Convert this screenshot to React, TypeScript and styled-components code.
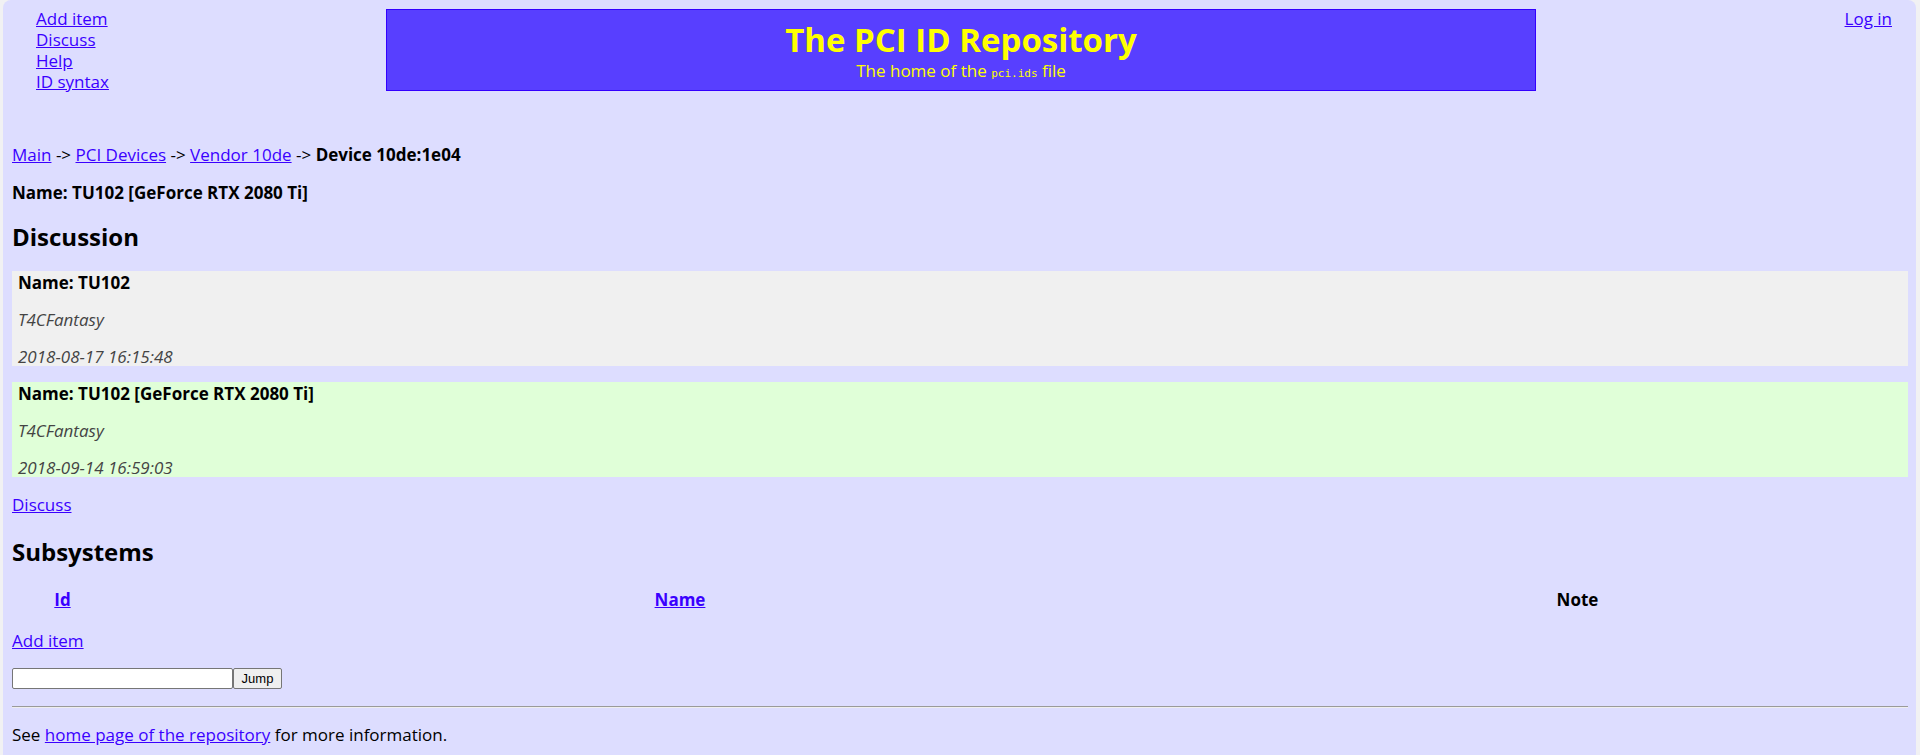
import React from "react";
import styled, { createGlobalStyle } from "styled-components";

const GlobalStyle = createGlobalStyle`
  html { background: #f1f1f3; }
  body {
    margin: 0;
    font-family: "Open Sans", "Noto Sans", "DejaVu Sans", sans-serif;
    font-size: 17px;
    color: #000;
  }
  a { color: #3a00ff; text-decoration: underline; }
`;

const Page = styled.div`
  margin: 0 4px 0 3px;
  min-height: 755px;
  box-sizing: border-box;
  background: #ddf;
  border-radius: 8px 8px 0 0;
  padding: 0 8px 0 9px;
  line-height: 21px;
`;

const Header = styled.div`
  display: grid;
  grid-template-columns: 374px 1150px 1fr;
  align-items: start;
  padding-top: 9px;
  height: 135px;
`;

const Menu = styled.nav`
  display: flex;
  flex-direction: column;
  padding-left: 24px;
  margin-top: -1px;
`;

const TitleBox = styled.div`
  background: #583fff;
  border: 1px solid #3300ff;
  color: #ffff00;
  text-align: center;
  padding: 12px 0 6px;
`;

const Title = styled.h1`
  margin: 0;
  font-size: 33px;
  line-height: 36px;
  font-weight: 700;
`;

const Subtitle = styled.div`
  margin-top: 3px;
  font-size: 17px;
  line-height: 20px;
`;

const Code = styled.code`
  font-family: "DejaVu Sans Mono", "Liberation Mono", monospace;
  font-size: 11px;
`;

const Login = styled.div`
  text-align: right;
  padding-right: 16px;
  margin-top: -1px;
`;

const Para = styled.p<{ $top?: number; $bottom?: number }>`
  margin: ${(p) => p.$top ?? 16}px 0 ${(p) => p.$bottom ?? 16}px;
`;

const Crumbs = styled.p`
  margin: 0;
`;

const Heading = styled.h2<{ $top?: number }>`
  margin: ${(p) => p.$top ?? 20}px 0 20px;
  font-size: 24px;
  line-height: 29px;
  font-weight: 700;
`;

const Comment = styled.div<{ $bg: string }>`
  background: ${(p) => p.$bg};
  padding: 1px 6px 0;
  height: 95px;
  box-sizing: border-box;
  & + & {
    margin-top: 16px;
  }
`;

const CommentLine = styled.div<{ $meta?: boolean }>`
  font-weight: ${(p) => (p.$meta ? 400 : 700)};
  font-style: ${(p) => (p.$meta ? "italic" : "normal")};
  color: ${(p) => (p.$meta ? "#444" : "#000")};
  & + & {
    margin-top: 16px;
  }
`;

const Table = styled.table`
  width: 100%;
  border-spacing: 2px;
  margin: 0;
`;

const Th = styled.th<{ $w?: string }>`
  width: ${(p) => p.$w || "auto"};
  padding: 1px;
  text-align: center;
  font-weight: 700;
`;

const Form = styled.form`
  display: flex;
  margin: 17px 0;
  height: 21px;
`;

const Input = styled.input`
  width: 221px;
  height: 21px;
  box-sizing: border-box;
  border: 1px solid #767676;
  border-radius: 2px;
  background: #fff;
  padding: 0 2px;
`;

const Button = styled.button`
  width: 49px;
  height: 21px;
  box-sizing: border-box;
  border: 1px solid #767676;
  border-radius: 2px;
  background: #efefef;
  font-family: "Liberation Sans", Arial, sans-serif;
  font-size: 13px;
  padding: 0;
  color: #000;
`;

const Rule = styled.hr`
  margin: 0;
  border: 0;
  border-top: 1px solid #9a9a9a;
  border-bottom: 1px solid #eeeeee;
`;

export default function App() {
  return (
    <>
      <GlobalStyle />
      <Page>
        <Header>
          <Menu>
            <a href="#">Add item</a>
            <a href="#">Discuss</a>
            <a href="#">Help</a>
            <a href="#">ID syntax</a>
          </Menu>
          <TitleBox>
            <Title>The PCI ID Repository</Title>
            <Subtitle>
              The home of the <Code>pci.ids</Code> file
            </Subtitle>
          </TitleBox>
          <Login>
            <a href="#">Log in</a>
          </Login>
        </Header>
        <Crumbs>
          <a href="#">Main</a> -&gt; <a href="#">PCI Devices</a> -&gt;{" "}
          <a href="#">Vendor 10de</a> -&gt; <b>Device 10de:1e04</b>
        </Crumbs>
        <Para $top={17}>
          <b>Name: TU102 [GeForce RTX 2080 Ti]</b>
        </Para>
        <Heading $top={19}>Discussion</Heading>
        <Comment $bg="#f0f0f0">
          <CommentLine>Name: TU102</CommentLine>
          <CommentLine $meta>T4CFantasy</CommentLine>
          <CommentLine $meta>2018-08-17 16:15:48</CommentLine>
        </Comment>
        <Comment $bg="#e0ffd8">
          <CommentLine>Name: TU102 [GeForce RTX 2080 Ti]</CommentLine>
          <CommentLine $meta>T4CFantasy</CommentLine>
          <CommentLine $meta>2018-09-14 16:59:03</CommentLine>
        </Comment>
        <Para $top={17} $bottom={0}>
          <a href="#">Discuss</a>
        </Para>
        <Heading $top={22}>Subsystems</Heading>
        <Table>
          <thead>
            <tr>
              <Th $w="95px">
                <a href="#">Id</a>
              </Th>
              <Th $w="1132px">
                <a href="#">Name</a>
              </Th>
              <Th>Note</Th>
            </tr>
          </thead>
        </Table>
        <Para $top={17} $bottom={0}>
          <a href="#">Add item</a>
        </Para>
        <Form onSubmit={(e) => e.preventDefault()}>
          <Input type="text" />
          <Button type="submit">Jump</Button>
        </Form>
        <Rule />
        <Para>
          See <a href="#">home page of the repository</a> for more information.
        </Para>
      </Page>
    </>
  );
}
